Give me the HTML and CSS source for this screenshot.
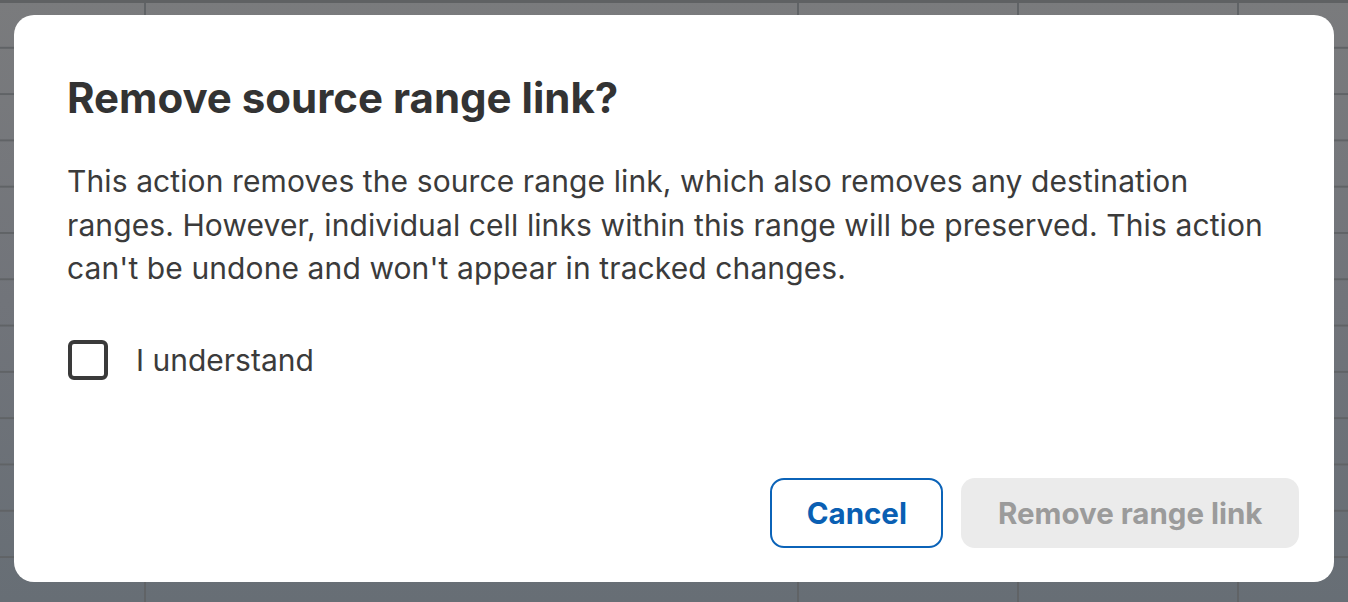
FILE: index.html
```html
<!DOCTYPE html>
<html lang="en">
<head>
<meta charset="utf-8">
<title>Remove source range link?</title>
<link rel="stylesheet" href="styles.css">
</head>
<body>
<div class="dialog" role="dialog" aria-labelledby="dlg-title">
  <h1 class="dialog-title" id="dlg-title">Remove source range link?</h1>
  <p class="dialog-text">This action removes the source range link, which also removes any destination ranges. However, individual cell links within this range will be preserved. This action can't be undone and won't appear in tracked changes.</p>
  <label class="check-row">
    <input type="checkbox" class="check-input">
    <span class="check-box"></span>
    <span class="check-label">I understand</span>
  </label>
  <div class="dialog-footer">
    <button class="btn btn-secondary">Cancel</button>
    <button class="btn btn-primary" disabled>Remove range link</button>
  </div>
</div>
</body>
</html>
```
FILE: styles.css
```css
html,body{height:100%;}
body{
  margin:0;
  font-family:"Inter","Noto Sans",sans-serif;
  background-color:#717478;
  background-image:
    linear-gradient(to bottom,#5f6163 0,#5f6163 3px,transparent 3px),
    linear-gradient(to right,transparent 144px,#606366 144px,#606366 146px,transparent 146px,transparent 797px,#606366 797px,#606366 799px,transparent 799px,transparent 1017px,#606366 1017px,#606366 1019px,transparent 1019px,transparent 1237px,#606366 1237px,#606366 1239px,transparent 1239px),
    linear-gradient(to bottom,#606366 0,#606366 2px,transparent 2px),
    linear-gradient(to bottom,#7a7b7d 0%,#71747a 50%,#676e75 100%);
  background-size:100% 100%,100% 100%,100% 46.3px,100% 100%;
  background-position:0 0,0 0,0 0.5px,0 0;
  background-repeat:no-repeat,no-repeat,repeat-y,no-repeat;
  display:flex;
  align-items:flex-start;
  justify-content:center;
  overflow:hidden;
}
.dialog{
  box-sizing:border-box;
  margin-top:15px;
  width:1320px;
  height:567px;
  background:#fff;
  border-radius:20px;
  padding:58px 35px 34px 53px;
  display:flex;
  flex-direction:column;
}
.dialog-title{
  margin:0;
  font-size:42px;
  line-height:50px;
  font-weight:700;
  color:#333333;
}
.dialog-text{
  margin:37px 0 0 0;
  max-width:1215px;
  font-size:30px;
  line-height:43.5px;
  letter-spacing:0.1px;
  color:#3b3b3b;
}
.check-row{
  margin-top:49px;
  display:flex;
  align-items:center;
  cursor:pointer;
  padding-left:1px;
}
.check-input{position:absolute;opacity:0;width:0;height:0;margin:0;}
.check-box{
  box-sizing:border-box;
  width:40px;
  height:40px;
  border:4px solid #3a3a3a;
  border-radius:6px;
  flex:none;
}
.check-label{
  margin-left:28px;
  font-size:30px;
  line-height:40px;
  color:#3b3b3b;
}
.dialog-footer{
  margin-top:auto;
  display:flex;
  justify-content:flex-end;
  gap:18px;
}
.btn{
  box-sizing:border-box;
  height:70px;
  border-radius:14px;
  font-family:"Inter","Noto Sans",sans-serif;
  font-size:29.5px;
  font-weight:700;
  cursor:pointer;
}
.btn-secondary{
  background:#fff;
  border:2px solid #0b63b8;
  color:#0a5fb3;
  padding:0 34.5px;
}
.btn-primary{
  background:#ebebeb;
  border:none;
  color:#9b9b9b;
  padding:0 36.5px;
  cursor:default;
}
```
